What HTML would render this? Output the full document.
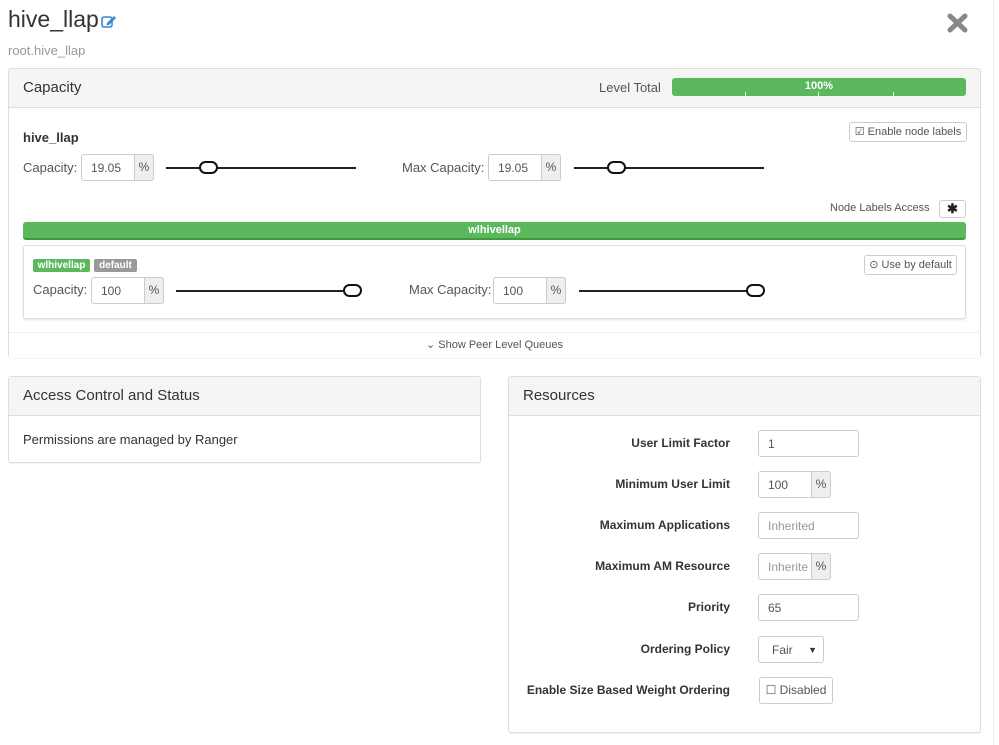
<!DOCTYPE html>
<html><head><meta charset="utf-8"><style>
*{box-sizing:border-box}
body{margin:0;width:999px;height:745px;background:#fff;font-family:"Liberation Sans",Arial,sans-serif;color:#333;position:relative;overflow:hidden}
.a{position:absolute}
.panel{position:absolute;border:1px solid #ddd;border-radius:3px;background:#fff;box-shadow:0 1px 1px rgba(0,0,0,.05)}
.ph{position:absolute;left:0;right:0;top:0;height:39px;background:#f5f5f5;border-bottom:1px solid #ddd;font-size:15px;padding:10px 14px;color:#333}
.lbl{position:absolute;font-size:13px;color:#555;line-height:16px}
.inp{position:absolute;height:27px;border:1px solid #ccc;border-radius:3px;background:#fff;font-size:12px;color:#555;padding:6px 9px;line-height:14px}
.add{position:absolute;top:-1px;right:-1px;bottom:-1px;width:20px;background:#eee;border:1px solid #ccc;border-radius:0 3px 3px 0;font-size:12px;color:#555;text-align:center;line-height:25px}
.sl{position:absolute;height:2px;background:#222}
.th{position:absolute;width:19px;height:13px;border:2px solid #111;border-radius:7px;background:#fff}
.btn{position:absolute;border:1px solid #ccc;border-radius:3px;background:#fff;font-size:11px;color:#555;text-align:center}
.rl{position:absolute;right:0;width:730px;text-align:right;font-size:12px;font-weight:bold;color:#333}
</style></head><body>
<div class="a" style="left:8px;top:6px;font-size:23px;color:#333">hive_llap</div>
<svg class="a" style="left:101px;top:14px" width="16" height="14" viewBox="0 0 16 14"><rect x="1" y="3" width="10" height="10" rx="2" fill="none" stroke="#3a87d0" stroke-width="1.6"/><path d="M6 9 L13 2 L15 4 L8 11 L5.5 11.5Z" fill="#3a87d0"/></svg>
<div class="a" style="left:8px;top:43px;font-size:13px;color:#999">root.hive_llap</div>
<svg class="a" style="left:947px;top:13px" width="21" height="20" viewBox="0 0 21 20"><path d="M3 3L18 17M18 3L3 17" stroke="#888" stroke-width="5" stroke-linecap="round"/></svg>
<div class="a" style="left:993px;top:0;width:1px;height:745px;background:#eee"></div>

<div class="panel" style="left:8px;top:68px;width:973px;height:290px">
 <div class="ph">Capacity</div>
 <div class="lbl" style="left:590px;top:11px">Level Total</div>
 <div class="a" style="left:663px;top:9px;width:294px;height:18px;background:#5cb85c;border-radius:3px;color:#fff;font-size:11px;font-weight:bold;text-align:center;line-height:17px">100%
  <div class="a" style="left:73px;bottom:0;width:1px;height:4px;background:#dfe"></div>
  <div class="a" style="left:146px;bottom:0;width:1px;height:4px;background:#dfe"></div>
  <div class="a" style="left:221px;bottom:0;width:1px;height:4px;background:#dfe"></div>
 </div>
 <div class="a" style="left:14px;top:61px;font-size:13px;font-weight:bold;color:#333">hive_llap</div>
 <div class="btn" style="left:840px;top:53px;width:118px;height:20px;line-height:18px">☑ Enable node labels</div>
 <div class="lbl" style="left:14px;top:91px">Capacity:</div>
 <div class="inp" style="left:72px;top:85px;width:73px">19.05<div class="add">%</div></div>
 <div class="sl" style="left:157px;top:98px;width:190px"></div><div class="th" style="left:190px;top:92px"></div>
 <div class="lbl" style="left:393px;top:91px">Max Capacity:</div>
 <div class="inp" style="left:479px;top:85px;width:73px">19.05<div class="add">%</div></div>
 <div class="sl" style="left:565px;top:98px;width:190px"></div><div class="th" style="left:598px;top:92px"></div>
 <div class="a" style="left:821px;top:133px;font-size:11px;color:#555">Node Labels Access</div>
 <div class="btn" style="left:930px;top:131px;width:27px;height:18px;line-height:16px;font-size:13px;color:#222;font-weight:bold">✱</div>
 <div class="a" style="left:14px;top:153px;width:943px;height:18px;background:#5cb85c;border-radius:3px;border-bottom:2px solid #3f9a3f;color:#fff;font-size:11px;font-weight:bold;text-align:center;line-height:16px">wlhivellap</div>
 <div class="a" style="left:14px;top:176px;width:943px;height:74px;border:1px solid #ddd;border-radius:3px;box-shadow:0 1px 2px rgba(0,0,0,.12)">
  <div class="a" style="left:9px;top:13px;width:57px;height:13px;background:#5cb85c;border-radius:2px;color:#fff;font-size:10px;font-weight:bold;text-align:center;line-height:13px">wlhivellap</div>
  <div class="a" style="left:70px;top:13px;width:43px;height:13px;background:#999;border-radius:2px;color:#fff;font-size:10px;font-weight:bold;text-align:center;line-height:13px">default</div>
  <div class="btn" style="left:840px;top:9px;width:93px;height:20px;line-height:18px">⊙ Use by default</div>
  <div class="lbl" style="left:9px;top:36px">Capacity:</div>
  <div class="inp" style="left:67px;top:31px;width:73px">100<div class="add">%</div></div>
  <div class="sl" style="left:152px;top:44px;width:180px"></div><div class="th" style="left:319px;top:38px"></div>
  <div class="lbl" style="left:385px;top:36px">Max Capacity:</div>
  <div class="inp" style="left:469px;top:31px;width:73px">100<div class="add">%</div></div>
  <div class="sl" style="left:555px;top:44px;width:175px"></div><div class="th" style="left:722px;top:38px"></div>
 </div>
 <div class="a" style="left:0;right:0;top:263px;height:26px;border-top:1px solid #eee;background:#fff;font-size:11px;color:#555;text-align:center;line-height:24px">⌄ Show Peer Level Queues</div>
</div>

<div class="panel" style="left:8px;top:376px;width:473px;height:87px">
 <div class="ph">Access Control and Status</div>
 <div class="a" style="left:14px;top:55px;font-size:13px;color:#333">Permissions are managed by Ranger</div>
</div>

<div class="panel" style="left:508px;top:376px;width:473px;height:357px">
 <div class="ph">Resources</div>
</div>
<div class="rl" style="left:0;top:436px">User Limit Factor</div>
<div class="inp" style="left:758px;top:430px;width:101px">1</div>
<div class="rl" style="left:0;top:477px">Minimum User Limit</div>
<div class="inp" style="left:758px;top:471px;width:73px">100<div class="add">%</div></div>
<div class="rl" style="left:0;top:518px">Maximum Applications</div>
<div class="inp" style="left:758px;top:512px;width:101px;color:#999">Inherited</div>
<div class="rl" style="left:0;top:559px">Maximum AM Resource</div>
<div class="inp" style="left:758px;top:553px;width:73px;color:#999;overflow:hidden">Inherite<div class="add">%</div></div>
<div class="rl" style="left:0;top:600px">Priority</div>
<div class="inp" style="left:758px;top:594px;width:101px">65</div>
<div class="rl" style="left:0;top:642px">Ordering Policy</div>
<div class="inp" style="left:758px;top:636px;width:66px;padding-left:13px">Fair<span class="a" style="right:6px;top:6px;font-size:9px;color:#333">▼</span></div>
<div class="rl" style="left:0;top:683px">Enable Size Based Weight Ordering</div>
<div class="btn" style="left:759px;top:677px;width:74px;height:27px;line-height:25px;font-size:12px">☐ Disabled</div>
</body></html>
